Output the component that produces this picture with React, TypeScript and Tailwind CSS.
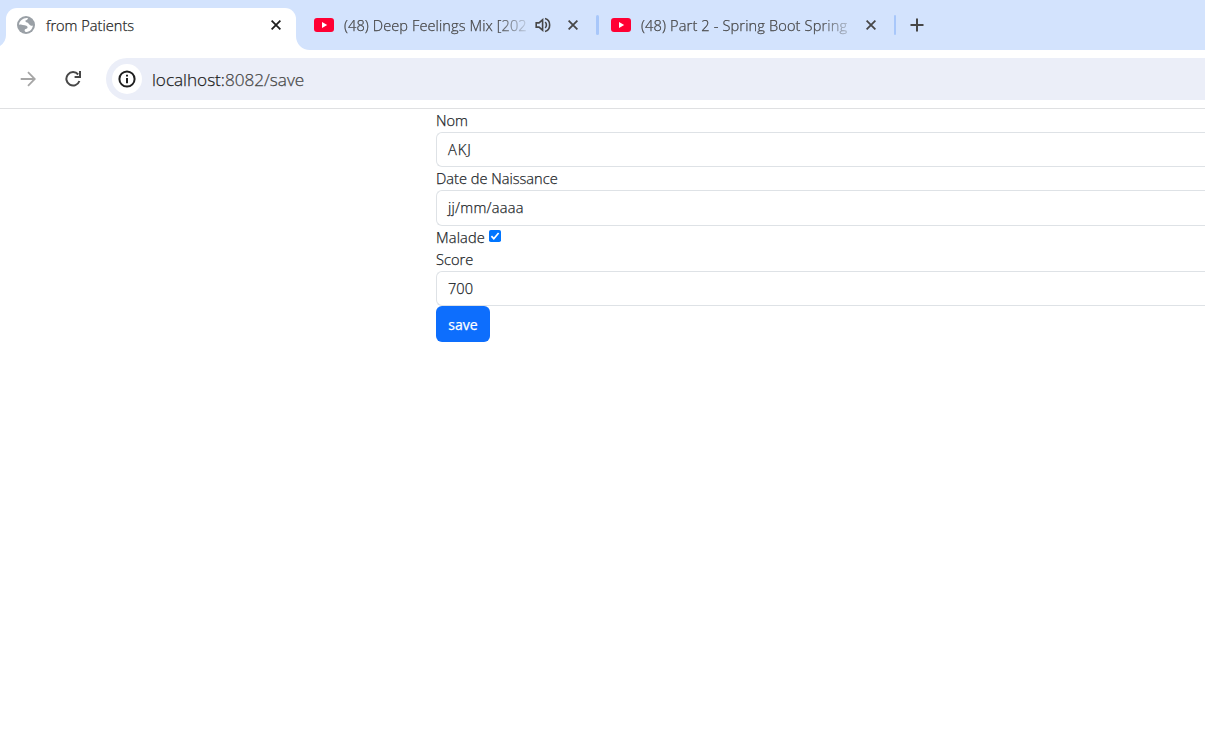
import type { ReactNode } from "react";

function YouTubeIcon() {
  return (
    <svg width="20" height="14" viewBox="0 0 20 14" className="shrink-0">
      <rect width="20" height="14" rx="3" fill="#ff0033" />
      <path d="M8 4l5.2 3L8 10z" fill="#fff" />
    </svg>
  );
}

function GlobeIcon() {
  return (
    <svg width="18" height="18" viewBox="0 0 18 18" className="shrink-0">
      <circle cx="9" cy="9" r="9" fill="#9aa0a6" />
      <path
        d="M11 2.2C10.6 3.6 9.6 4.2 8.4 4.6C8.2 6 9.4 6.6 11 6.8C11.4 8 12.8 8.8 13.6 9.6C14.6 10 15.4 9.8 15.9 9.4C15.6 13.2 12.6 15.9 8.6 15.9C7 14.8 7.2 13.2 9.4 12.8C11 12.4 11 10.4 9.4 9.8C7 9 4.6 9.4 2 8.6C2.4 4.8 6.6 1.4 11 2.2Z"
        fill="#fff"
      />
    </svg>
  );
}

function CloseIcon() {
  return (
    <svg width="10" height="10" viewBox="0 0 10 10" fill="none" stroke="currentColor" strokeWidth="1.8" className="shrink-0">
      <path d="M.6 .6l8.8 8.8M9.4 .6L.6 9.4" />
    </svg>
  );
}

function SpeakerIcon() {
  return (
    <svg width="16" height="16" viewBox="0 0 16 16" fill="none" stroke="#474747" strokeWidth="1.6" className="shrink-0">
      <path d="M1.2 5.9H4L7.6 2.8V13.2L4 10.1H1.2Z" />
      <path d="M10 5.1C11.9 6 11.9 10 10 10.9" />
      <path d="M10 1.6C16.2 3.2 16.2 12.8 10 14.4" />
    </svg>
  );
}

function Tabs() {
  return (
    <header className="flex h-[50px] bg-[#d3e3fd] text-[14.6px] text-[#474747]">
      <svg width="6" height="50" viewBox="0 0 6 50" className="shrink-0">
        <path d="M0 46Q6 42 6 35V50H0Z" fill="#fff" />
      </svg>
      <div className="mt-2 flex h-[42px] w-[290px] items-start rounded-t-[11px] bg-white pl-[11px] pt-2 text-[#1f1f1f]">
        <GlobeIcon />
        <span className="-mt-px ml-[11px] w-[225px] whitespace-nowrap leading-5">from Patients</span>
        <span className="mt-1">
          <CloseIcon />
        </span>
      </div>
      <svg width="14" height="50" viewBox="0 0 14 50" className="shrink-0">
        <path d="M0 36C0 44 6 50 14 50H0Z" fill="#fff" />
      </svg>
      <div className="flex h-[50px] items-center pl-1">
        <YouTubeIcon />
        <span className="ml-[10px] w-[183px] whitespace-nowrap leading-5 tracking-[0.08px] [mask-image:linear-gradient(to_right,#000_154px,transparent_188px)]">
          (48) Deep Feelings Mix [202
        </span>
        <span className="ml-[8px]">
          <SpeakerIcon />
        </span>
        <span className="ml-[17px]">
          <CloseIcon />
        </span>
      </div>
      <i className="ml-[18px] mt-[15px] h-5 w-[3px] rounded-full bg-[#a8c7fa]" />
      <div className="flex h-[50px] items-center pl-[12px]">
        <YouTubeIcon />
        <span className="ml-[10px] w-[208px] whitespace-nowrap leading-5 tracking-[0.13px] [mask-image:linear-gradient(to_right,#000_178px,transparent_218px)]">
          (48) Part 2 - Spring Boot Spring
        </span>
        <span className="ml-[17px]">
          <CloseIcon />
        </span>
      </div>
      <i className="ml-[18px] mt-[15px] h-5 w-[2px] rounded-full bg-[#a8c7fa]" />
      <svg width="14" height="14" viewBox="0 0 14 14" stroke="#474747" strokeWidth="2" className="ml-[14px] mt-[18px]">
        <path d="M7 .5V13.5M.5 7H13.5" />
      </svg>
    </header>
  );
}

function AddressBar() {
  return (
    <div className="flex h-[59px] items-start border-b border-[#dfe0e2] bg-white pt-2">
      <svg width="16" height="16" viewBox="0 0 16 16" fill="none" stroke="#a6a6a6" strokeWidth="1.8" className="ml-[20px] mt-[13px]">
        <path d="M.7 8H14.4M8 1.2L14.8 8L8 14.8" />
      </svg>
      <svg width="16" height="16" viewBox="0 0 16 16" className="ml-[29px] mt-[13px]">
        <path d="M13.2 3.5A6.7 6.7 0 1 0 14.4 10" fill="none" stroke="#474747" strokeWidth="2" />
        <path d="M9.6 6.9H16V0H14V4.9H9.6Z" fill="#474747" />
      </svg>
      <div className="ml-[25px] flex h-[42px] grow items-center rounded-l-full bg-[#ebeef8] pl-[6px]">
        <span className="flex size-[30px] items-center justify-center rounded-full bg-white">
          <svg width="18" height="18" viewBox="0 0 18 18">
            <circle cx="9" cy="9" r="7.6" fill="none" stroke="#1f1f1f" strokeWidth="2" />
            <path d="M8 4.7H10V6.6H8ZM8 8H10V13.2H8Z" fill="#1f1f1f" />
          </svg>
        </span>
        <span className="ml-[10px] mt-px text-[17.2px] tracking-[-0.03px] text-[#1f1f1f]">
          localhost:<span className="text-[#474747]">8082/save</span>
        </span>
      </div>
    </div>
  );
}

function Field({ label, children, tall }: { label: string; children: ReactNode; tall?: boolean }) {
  return (
    <div>
      <label className="block h-[23px] leading-[23px]">{label}</label>
      <div
        className={`flex items-center rounded-l-md border border-r-0 border-[#dee2e6] pl-[11px] ${tall ? "h-[36px] pb-px" : "h-[35px]"}`}
      >
        {children}
      </div>
    </div>
  );
}

export default function App() {
  return (
    <div className="h-[735px] w-[1205px] overflow-hidden bg-white font-['Open_Sans',sans-serif] font-light [-webkit-text-stroke:0.25px]">
      <Tabs />
      <AddressBar />
      <main className="ml-[436px] text-[14.6px] text-[#212529]">
        <Field label="Nom">
          <span className="tracking-[1px]">AKJ</span>
        </Field>
        <Field label="Date de Naissance" tall>
          <span className="tracking-[0.25px]">jj/mm/aaaa</span>
        </Field>
        <div className="flex h-[22px] items-center">
          <span className="mt-px w-[49px] tracking-[0.15px]">Malade</span>
          <svg width="12" height="12" viewBox="0 0 12 12" className="mb-[2px] ml-1">
            <rect width="12" height="12" rx="1.8" fill="#0075ff" />
            <path d="M2.4 6.2L4.8 8.7L9.6 3" fill="none" stroke="#fff" strokeWidth="1.7" />
          </svg>
        </div>
        <Field label="Score">700</Field>
        <button className="block h-9 w-[54px] rounded-md bg-[#0d6efd] pt-px text-[14px] font-normal text-white">save</button>
      </main>
    </div>
  );
}
